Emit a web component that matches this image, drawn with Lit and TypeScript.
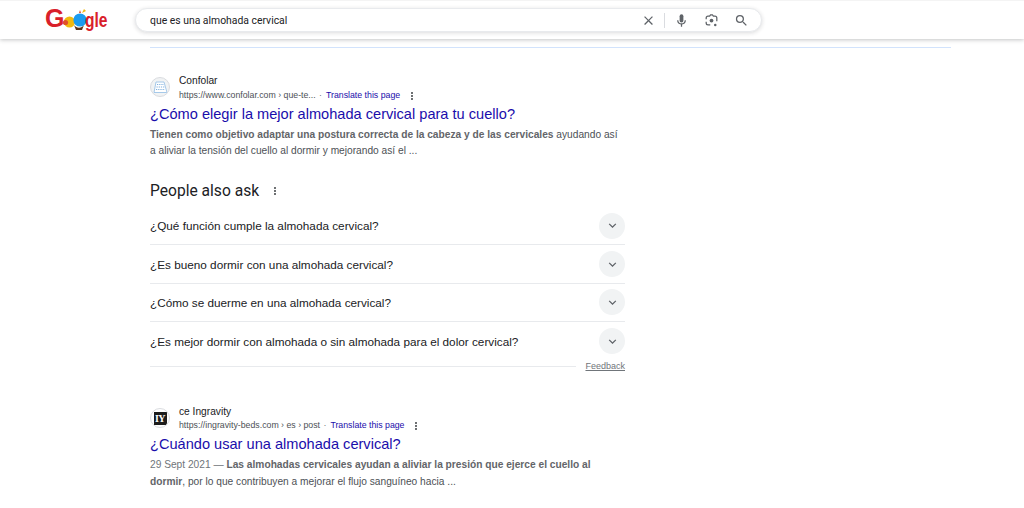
import { LitElement, html, css } from "lit";
import { customElement } from "lit/decorators.js";

const chevron = html`<svg width="15" height="15" viewBox="0 0 24 24"><path fill="#5f6368" d="M16.6 8.6 12 13.2 7.4 8.6 6 10l6 6 6-6z"/></svg>`;
const dots = html`<svg width="12" height="12" viewBox="0 0 24 24"><path fill="#3c4043" d="M12 8a2 2 0 1 0 0-4 2 2 0 0 0 0 4zm0 2a2 2 0 1 0 0 4 2 2 0 0 0 0-4zm0 6a2 2 0 1 0 0 4 2 2 0 0 0 0-4z"/></svg>`;

@customElement("app-root")
export class AppRoot extends LitElement {
  static styles = css`
    :host { display: block; width: 1024px; height: 508px; overflow: hidden; background: #fff; font-family: "Liberation Sans", Arial, sans-serif; color: #202124; }
    .header { height: 38px; display: flex; align-items: center; box-shadow: 0 1px 4px rgba(60,64,67,.3); position: relative; background: #fff; border-top: 1px solid #f4f4f4; }
    .logo-wrap { width: 135px; flex: none; display: flex; padding-left: 45px; box-sizing: border-box; }
    .logo { width: 63px; height: 26px; display: block; overflow: visible; }
    .logo text { font-family: "Liberation Sans", Arial, sans-serif; font-weight: 700; fill: #d9202a; }
    .search { width: 627px; box-sizing: border-box; height: 24px; border: 1px solid #e8eaed; border-radius: 13px; box-shadow: 0 1px 4px rgba(32,33,36,.16); display: flex; align-items: center; padding-left: 14px; flex: none; background: #fff; }
    .q { flex: 1; font-family: Roboto, "Liberation Sans", sans-serif; font-size: 10.4px; color: #202124; }
    .icons { display: flex; align-items: center; padding-right: 12.5px; }
    .ic { display: block; }
    .sep { width: 1px; height: 15px; background: #dadce0; margin: 0 8.5px 0 8.5px; }
    .gap { margin-left: 15px; }
    .main { padding-left: 150px; }
    .rule { width: 801px; height: 1px; background: #d2e3fc; margin-top: 8px; }
    .col { width: 475px; }
    .r1 { padding-top: 26px; }
    .r2 { padding-top: 33px; }
    .site { display: flex; gap: 9px; height: 28px; }
    .fav { width: 20px; height: 20px; border-radius: 50%; background: #f1f3f4; border: 1px solid #dadce0; box-sizing: border-box; margin-top: 3px; display: flex; align-items: center; justify-content: center; flex: none; overflow: hidden; }
    .fav.dark { background: #fff; }
    .iy { width: 13px; height: 13px; background: #1c1c1c; color: #fff; font-size: 10px; font-weight: 700; line-height: 13px; text-align: center; letter-spacing: -.5px; font-family: "Liberation Serif", serif; }
    .name { font-size: 10.2px; line-height: 13px; color: #202124; }
    .url { display: flex; align-items: center; font-size: 8.76px; line-height: 13px; color: #4d5156; height: 15px; white-space: pre; }
    .r1 .url { margin-top: 1px; }
    .tr { color: #1a0dab; margin-left: 4px; }
    .url .mid { color: #70757a; margin-left: 1px; }
    .url svg { margin-left: 6px; }
    h3 { margin: 2px 0 0; font-weight: 400; font-size: 14.6px; line-height: 20px; color: #1a0dab; white-space: nowrap; }
    .r2 h3 { margin-top: 1px; }
    .snip { font-size: 10.2px; line-height: 16.5px; color: #4d5156; margin-top: 2.5px; white-space: nowrap; }
    .r2 .snip { margin-top: 3px; }
    .snip b { color: #636569; }
    .date { color: #70757a; }
    .paa-h { display: flex; align-items: center; font-family: Roboto, "Liberation Sans", sans-serif; font-size: 15.6px; line-height: 22px; margin-top: 20.5px; color: #202124; }
    .paa-h svg { margin-left: 10px; }
    .list { margin-top: 5.2px; }
    .q-row { height: 38.3px; box-sizing: border-box; display: flex; align-items: center; justify-content: space-between; border-bottom: 1px solid #e8eaed; font-size: 11.75px; color: #202124; }
    .q-row:last-child { border-bottom: none; }
    .circle { width: 26px; height: 26px; border-radius: 50%; background: #f1f3f4; display: flex; align-items: center; justify-content: center; }
    .fb { display: flex; align-items: center; height: 12px; }
    .fb i { flex: 1; height: 1px; background: #e8eaed; margin-right: 9px; }
    .fb a { font-size: 9px; color: #70757a; text-decoration: underline; }
  `;

  render() {
    const qs = ["¿Qué función cumple la almohada cervical?", "¿Es bueno dormir con una almohada cervical?", "¿Cómo se duerme en una almohada cervical?", "¿Es mejor dormir con almohada o sin almohada para el dolor cervical?"];
    return html`
      <div class="header">
        <div class="logo-wrap">
          <svg class="logo" viewBox="0 0 63 26">
            <text x="0" y="20" font-size="25">G</text>
            <circle cx="24.5" cy="15" r="5.6" fill="#f2b90f"/>
            <circle cx="20.500" cy="15.500" r="2.6" fill="#e0502a"/>
            <path d="M29 18a6 6 0 0 0 10 0l-2 5h-6z" fill="#5d3317"/>
            <circle cx="35" cy="13" r="6.6" fill="#1a9bf0"/>
            <path d="M37 6l2-4 2 2z" fill="#f2b90f"/>
            <path d="M34 6l1-3 1 3z" fill="#e0502a"/>
            <text x="40" y="20" font-size="21" textLength="22.500" lengthAdjust="spacingAndGlyphs">gle</text>
          </svg>
        </div>
        <div class="search">
          <span class="q">que es una almohada cervical</span>
          <div class="icons">
            <svg class="ic" width="15" height="15" viewBox="0 0 24 24"><path fill="#5f6368" d="M19 6.400 17.600 5 12 10.600 6.400 5 5 6.400l5.600 5.600L5 17.600 6.400 19l5.600-5.600 5.600 5.600 1.400-1.400-5.600-5.600z"/></svg>
            <span class="sep"></span>
            <svg class="ic" width="15" height="15" viewBox="0 0 24 24"><path fill="#5f6368" d="M12 15a3 3 0 0 0 3-3V5a3 3 0 0 0-6 0v7a3 3 0 0 0 3 3z"/><path fill="#5f6368" d="M17 11.500a5 5 0 0 1-10 0H5a7 7 0 0 0 6 6.800V22h2v-3.700a7 7 0 0 0 6-6.800z"/></svg>
            <svg class="ic gap" width="15" height="15" viewBox="0 0 24 24"><g fill="none" stroke="#5f6368" stroke-width="2"><path d="M3.500 10V8a3 3 0 0 1 3-3H9l1.500-2h3L15 5h2.500a3 3 0 0 1 3 3v5M3.500 14v2a3 3 0 0 0 3 3H10"/></g><circle cx="12" cy="12" r="3" fill="#5f6368"/><circle cx="18" cy="19" r="2" fill="#5f6368"/></svg>
            <svg class="ic gap" width="15" height="15" viewBox="0 0 24 24"><path fill="#5f6368" d="M15.500 14h-.79l-.28-.27A6.470 6.470 0 0 0 16 9.500 6.500 6.500 0 1 0 9.500 16c1.610 0 3.090-.59 4.230-1.570l.27.28v.79l5 4.990L20.490 19l-4.990-5zm-6 0C7.010 14 5 11.990 5 9.500S7.010 5 9.500 5 14 7.010 14 9.500 11.990 14 9.500 14z"/></svg>
          </div>
        </div>
      </div>
      <div class="main">
        <div class="rule"></div>
        <div class="col">
          <div class="r1">
            <div class="site">
              <div class="fav">
                <svg width="15" height="13" viewBox="0 0 15 13"><path d="M3 1h8l3 10.500H1z" fill="#fff" stroke="#9cc3e6" stroke-width=".9"/><path d="M4 3.500h7M3.500 6h8M3 8.500h9" stroke="#7fb0de" stroke-width="1.100" stroke-dasharray="1.200 1"/></svg>
              </div>
              <div>
                <div class="name">Confolar</div>
                <div class="url">https://www.confolar.com › que-te... <span class="mid">·</span><span class="tr">Translate this page</span>${dots}</div>
              </div>
            </div>
            <h3>¿Cómo elegir la mejor almohada cervical para tu cuello?</h3>
            <div class="snip"><b>Tienen como objetivo adaptar una postura correcta de la cabeza y de las cervicales</b> ayudando así<br>a aliviar la tensión del cuello al dormir y mejorando así el ...</div>
          </div>
          <div class="paa-h">People also ask ${dots}</div>
          <div class="list">
            ${qs.map((q) => html`<div class="q-row"><span>${q}</span><span class="circle">${chevron}</span></div>`)}
          </div>
          <div class="fb"><i></i><a>Feedback</a></div>
          <div class="r2">
            <div class="site">
              <div class="fav dark"><div class="iy">IY</div></div>
              <div>
                <div class="name">ce Ingravity</div>
                <div class="url">https://ingravity-beds.com › es › post <span class="mid">·</span><span class="tr">Translate this page</span>${dots}</div>
              </div>
            </div>
            <h3>¿Cuándo usar una almohada cervical?</h3>
            <div class="snip"><span class="date">29 Sept 2021 — </span><b>Las almohadas cervicales ayudan a aliviar la presión que ejerce el cuello al<br>dormir</b>, por lo que contribuyen a mejorar el flujo sanguíneo hacia ...</div>
          </div>
        </div>
      </div>
    `;
  }
}
